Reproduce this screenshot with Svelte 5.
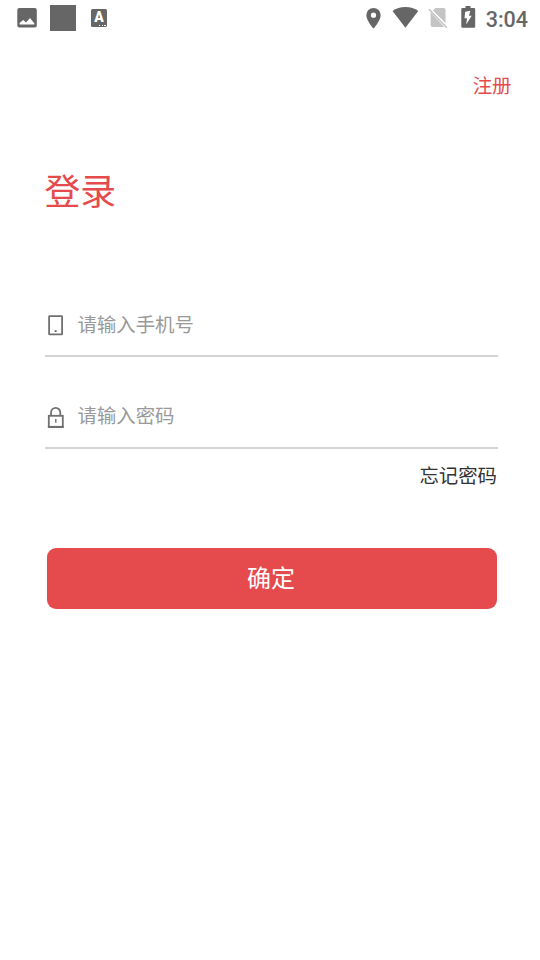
<script lang="ts">
    let phone = $state('');
    let password = $state('');

    function onSubmit(event: Event) {
        event.preventDefault();
    }
</script>

<div class="screen">
    <div class="status-bar">
        <div class="group left">
            <svg width="20" height="20" viewBox="0 0 20 20">
                <rect x=".3" width="19.5" height="19.6" rx="2" fill="#666" />
                <path d="M2.6 16.500V15L6.200 12 9 14.500 13 10 17.400 15.500V16.500z" fill="#fff" />
            </svg>
            <div class="square"></div>
            <div class="keyboard">
                <span>A</span>
                <i></i>
            </div>
        </div>
        <div class="group right">
            <svg class="pin" width="16" height="22" viewBox="0 0 16 22">
                <path
                    fill="#666"
                    fill-rule="evenodd"
                    d="M7.5 1A7.2 7.2 0 0 0 .3 8.2C.3 13.5 7.5 21.5 7.5 21.5s7.2-8 7.2-13.3A7.2 7.2 0 0 0 7.5 1zm0 4.6a2.6 2.6 0 1 1 0 5.2 2.6 2.6 0 0 1 0-5.2z"
                />
            </svg>
            <svg class="wifi" width="27" height="22" viewBox="0 0 27 22">
                <path fill="#666" d="M13.4 20.7.5 4.100C4 1.500 8.500 0 13.400 0s9.400 1.500 12.900 4.100z" />
            </svg>
            <svg class="sim" width="20" height="22" viewBox="0 0 20 22">
                <path fill="#c4c4c4" d="M7.500 1H15.500a2 2 0 0 1 2 2V16.500L4.800 3.700z" />
                <path fill="#c4c4c4" d="M2.600 5.200V18a2 2 0 0 0 2 2H16.200z" />
                <path stroke="#fff" stroke-width="1.200" d="M2.200 1.600 20 19.600" />
                <path stroke="#c4c4c4" stroke-width="1.600" d="M.9 2.200 18.900 20.700" />
            </svg>
            <svg class="battery" width="15" height="22" viewBox="0 0 15 22">
                <path fill="#666" d="M4.500 0h5v2H13a1.200 1.200 0 0 1 1.200 1.200V20.500A1.200 1.200 0 0 1 13 21.700H1.500A1.200 1.200 0 0 1 .3 20.500V3.200A1.200 1.200 0 0 1 1.500 2h3z" />
                <path fill="#fff" d="M9.300 4.800 4.200 5.800 3.500 12.200H6L5.200 18.600 10.700 9.800H8z" />
            </svg>
            <span class="time">3:04</span>
        </div>
    </div>

    <div class="nav">
        <a href="#register">注册</a>
    </div>

    <h1>登录</h1>

    <form onsubmit={onSubmit}>
        <label>
            <svg width="22" height="24" viewBox="0 0 22 24" fill="none">
                <rect x="4.100" y="4.200" width="13" height="18.200" rx=".5" stroke="#707070" stroke-width="1.800" />
                <rect x="9.700" y="18.300" width="1.900" height="1.700" fill="#555" />
            </svg>
            <input type="tel" bind:value={phone} placeholder="请输入手机号" />
        </label>
        <label>
            <svg width="22" height="24" viewBox="0 0 22 24" fill="none">
                <path stroke="#707070" stroke-width="1.800" d="M6.100 11.500V8.500a4.600 4.600 0 0 1 9.200 0V11.500" />
                <rect x="3.800" y="11.800" width="14" height="11" stroke="#707070" stroke-width="1.800" />
                <path stroke="#707070" stroke-width="2" d="M2.900 23H18.700" />
                <path stroke="#707070" stroke-width="1.400" d="M10.800 15V18.800" />
            </svg>
            <input class="password" type="password" bind:value={password} placeholder="请输入密码" />
        </label>
        <a class="forgot" href="#forgot">忘记密码</a>
        <button type="submit">确定</button>
    </form>
</div>

<style>
    :global(body) {
        margin: 0;
        background: #fff;
    }

    .screen {
        height: 960px;
        overflow: hidden;
        background: #fff;
        font-family: 'Noto Sans CJK SC', sans-serif;
    }

    .status-bar {
        display: flex;
        justify-content: space-between;
        height: 36px;
        padding: 0 12px 0 17px;
    }

    .group {
        display: flex;
        align-items: center;
    }

    svg {
        display: block;
        flex: none;
    }

    .square {
        width: 26px;
        height: 26px;
        margin: 0 15px 0 13px;
        background: #666;
    }

    .keyboard {
        position: relative;
        width: 16px;
        height: 18px;
        border-radius: 1.5px;
        background: #666;
        color: #fff;
        font: 900 14px/16px Roboto, sans-serif;
        text-align: center;
    }

    .keyboard i {
        position: absolute;
        right: 1px;
        bottom: 1px;
        width: 7px;
        height: 1.5px;
        background: repeating-linear-gradient(90deg, #fff 0 1.5px, #666 1.5px 2.7px);
    }

    .pin {
        margin-right: 10px;
    }

    .wifi {
        margin-right: 9px;
    }

    .sim {
        margin-right: 13px;
    }

    .battery {
        margin: -2px 10px 0 0;
    }

    .time {
        padding-top: 3px;
        color: #666;
        font: 500 21.5px/36px Roboto, sans-serif;
    }

    a {
        text-decoration: none;
    }

    .nav {
        display: flex;
        justify-content: flex-end;
        padding: 34px 28.5px 0 0;
        font-size: 19.4px;
        line-height: 30px;
    }

    .nav a {
        color: #e54b4d;
    }

    h1 {
        margin: 63px 0 0 44.5px;
        color: #e54b4d;
        font-size: 35.8px;
        font-weight: 400;
        line-height: 52px;
    }

    form {
        display: flex;
        flex-direction: column;
        margin: 78px 42px 0 45px;
    }

    label {
        display: flex;
        align-items: center;
        height: 64px;
        border-bottom: 2px solid #d4d4d4;
        box-sizing: border-box;
        margin-bottom: 28px;
    }

    input {
        flex: 1;
        min-width: 0;
        height: 40px;
        margin: 0 0 2px 10.5px;
        padding: 0;
        border: none;
        outline: none;
        color: #333;
        font: inherit;
        font-size: 19.4px;
    }

    .password {
        margin-bottom: 4px;
    }

    input::placeholder {
        color: #999;
        opacity: 1;
    }

    .forgot {
        align-self: flex-end;
        margin: -17px 1px 0 0;
        color: #333;
        font-size: 19.4px;
        line-height: 30px;
    }

    button {
        height: 61.5px;
        margin: 57.5px 1.5px 0;
        padding: 0 1px 3px 0;
        border: none;
        border-radius: 9px;
        background: #e54b4d;
        color: #fff;
        font: inherit;
        font-size: 24px;
        line-height: 58px;
    }
</style>
